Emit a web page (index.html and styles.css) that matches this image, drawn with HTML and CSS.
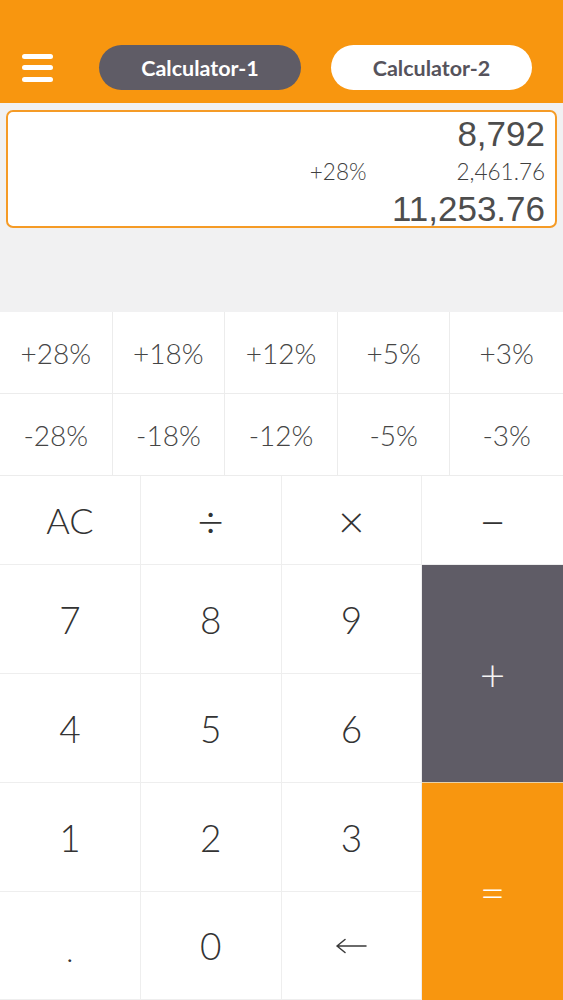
FILE: index.html
```html
<!DOCTYPE html>
<html lang="en">
<head>
    <meta charset="UTF-8">
    <meta name="viewport" content="width=device-width, initial-scale=1.0">
    <title>Calculator</title>
    <link rel="stylesheet" href="styles.css">
</head>
<body>
    <div class="app">
        <div class="header">
            <div class="menu">
                <span></span>
                <span></span>
                <span></span>
            </div>
            <div class="tab active">Calculator-1</div>
            <div class="tab">Calculator-2</div>
        </div>

        <div class="screen">
            <div class="display">
                <div class="line big">8,792</div>
                <div class="line small">
                    <span>+28%</span>
                    <span>2,461.76</span>
                </div>
                <div class="line big">11,253.76</div>
            </div>
        </div>

        <div class="percents">
            <div class="pct">+28%</div>
            <div class="pct">+18%</div>
            <div class="pct">+12%</div>
            <div class="pct">+5%</div>
            <div class="pct last">+3%</div>
            <div class="pct">-28%</div>
            <div class="pct">-18%</div>
            <div class="pct">-12%</div>
            <div class="pct">-5%</div>
            <div class="pct last">-3%</div>
        </div>

        <div class="keys">
            <div class="key ac">AC</div>
            <div class="key op">&divide;</div>
            <div class="key op">&times;</div>
            <div class="key op last">&minus;</div>

            <div class="key">7</div>
            <div class="key">8</div>
            <div class="key">9</div>
            <div class="key plus">+</div>

            <div class="key">4</div>
            <div class="key">5</div>
            <div class="key">6</div>

            <div class="key">1</div>
            <div class="key">2</div>
            <div class="key">3</div>
            <div class="key equals">=</div>

            <div class="key dot">.</div>
            <div class="key">0</div>
            <div class="key">
                <svg width="31" height="16" viewBox="0 0 31 16">
                    <path d="M1 8 H30 M1 8 L9 1.5 M1 8 L9 14.5" fill="none" stroke="#3a3a3a" stroke-width="1.5" stroke-linecap="round"/>
                </svg>
            </div>
        </div>
    </div>
</body>
</html>
```

FILE: styles.css
```css
body {
    margin: 0;
    background: #fff;
    font-family: Lato, "Open Sans", sans-serif;
}
.app {
    width: 563px;
    height: 1000px;
    overflow: hidden;
}
.header {
    height: 103px;
    box-sizing: border-box;
    padding: 45px 0 13px 22px;
    background: #f8960f;
    display: flex;
    align-items: center;
}
.menu {
    width: 31px;
    display: flex;
    flex-direction: column;
    gap: 6.5px;
    margin-right: 46px;
}
.menu span {
    display: block;
    height: 5px;
    border-radius: 3px;
    background: #fff;
}
.tab {
    width: 201px;
    height: 45px;
    border-radius: 23px;
    background: #fff;
    color: #56535c;
    font-size: 21.5px;
    font-weight: 700;
    display: flex;
    align-items: center;
    justify-content: center;
}
.tab.active {
    width: 202px;
    margin-right: 30px;
    background: #5f5c66;
    color: #fff;
}
.screen {
    height: 209px;
    box-sizing: border-box;
    padding: 7px 6px 0 6px;
    background: #f1f1f2;
}
.display {
    height: 118px;
    box-sizing: border-box;
    padding: 3px 10px 0 0;
    border: 2px solid #f59b26;
    border-radius: 7px;
    background: #fff;
    color: #4d4d4d;
    text-align: right;
}
.line.big {
    font-family: "Liberation Sans", Arial, sans-serif;
    font-size: 35px;
    line-height: 38px;
}
.line.small {
    font-size: 22.5px;
    font-weight: 300;
    line-height: 37px;
    color: #3f3f3f;
    display: flex;
    justify-content: flex-end;
    gap: 90px;
}
.percents {
    display: grid;
    grid-template-columns: repeat(5, 1fr);
    grid-template-rows: 82px 82px;
}
.pct {
    display: flex;
    align-items: center;
    justify-content: center;
    border-right: 1px solid #ececec;
    border-bottom: 1px solid #ececec;
    font-size: 28px;
    font-weight: 300;
    color: #454545;
}
.pct.last {
    border-right: none;
}
.keys {
    display: grid;
    grid-template-columns: repeat(4, 1fr);
    grid-template-rows: 89px 109px 109px 109px 108px;
}
.key {
    display: flex;
    align-items: center;
    justify-content: center;
    border-right: 1px solid #eeeeee;
    border-bottom: 1px solid #eeeeee;
    font-size: 37px;
    font-weight: 300;
    color: #333;
}
.key.ac {
    font-size: 36px;
}
.key.op {
    font-size: 46px;
}
.key.last {
    border-right: none;
}
.key.dot {
    padding-top: 8px;
    font-size: 30px;
}
.key.plus {
    grid-column: 4;
    grid-row: 2 / span 2;
    border: none;
    border-bottom: 1px solid #e9d2a8;
    background: #5f5c66;
    color: #f4f4f4;
    font-size: 44px;
}
.key.equals {
    grid-column: 4;
    grid-row: 4 / span 2;
    border: none;
    background: #f8960f;
    color: #fff;
    font-size: 44px;
}
```
